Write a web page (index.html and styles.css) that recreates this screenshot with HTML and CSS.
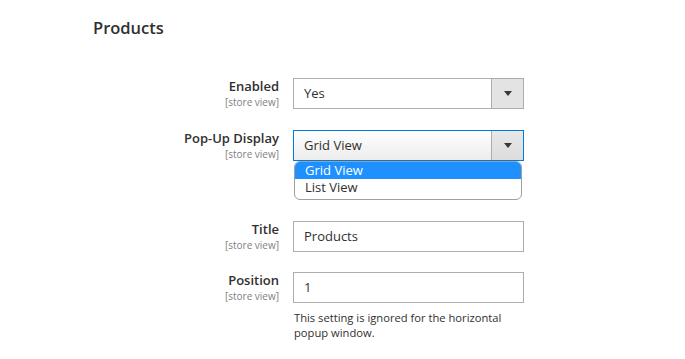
FILE: index.html
```
<!DOCTYPE html>
<html lang="en">
<head>
    <meta charset="UTF-8">
    <title>Products</title>
    <link rel="stylesheet" href="styles.css">
</head>
<body>

<div class="section">
    <h2 class="legend">Products</h2>

    <div class="field">
        <div class="label">
            <span class="label-name">Enabled</span>
            <span class="scope">[store view]</span>
        </div>
        <div class="control">
            <div class="select">
                <span class="select-value">Yes</span>
                <span class="select-arrow"></span>
            </div>
        </div>
    </div>

    <div class="field">
        <div class="label">
            <span class="label-name">Pop-Up Display</span>
            <span class="scope">[store view]</span>
        </div>
        <div class="control">
            <div class="select select-open">
                <span class="select-value">Grid View</span>
                <span class="select-arrow"></span>
            </div>
            <ul class="options">
                <li class="option selected">Grid View</li>
                <li class="option">List View</li>
            </ul>
        </div>
    </div>

    <div class="field field-title">
        <div class="label">
            <span class="label-name">Title</span>
            <span class="scope">[store view]</span>
        </div>
        <div class="control">
            <div class="input">Products</div>
        </div>
    </div>

    <div class="field">
        <div class="label">
            <span class="label-name">Position</span>
            <span class="scope">[store view]</span>
        </div>
        <div class="control">
            <div class="input">1</div>
            <div class="note">This setting is ignored for the horizontal popup window.</div>
        </div>
    </div>
</div>

</body>
</html>
```

FILE: styles.css
```
body {
    font-family: "Open Sans", sans-serif;
    margin: 0;
    padding: 0;
    background-color: #fff;
    color: #303030;
}
.section {
    padding: 16px 0 0 93px;
}
.legend {
    margin: 0 0 38px;
    font-size: 16.5px;
    font-weight: 600;
    line-height: 24px;
    color: #303030;
}
.field {
    display: grid;
    grid-template-columns: 186px 231px;
    column-gap: 14px;
    margin-bottom: 21px;
}
.field-title {
    margin-bottom: 20px;
}
.label {
    display: flex;
    flex-direction: column;
    align-items: flex-end;
    text-align: right;
    margin-top: -1px;
}
.label-name {
    font-size: 13px;
    font-weight: 600;
    line-height: 18px;
}
.scope {
    font-size: 10px;
    line-height: 14px;
    color: #808080;
}
.select {
    display: flex;
    height: 31px;
    box-sizing: border-box;
    border: 1px solid #adadad;
    background: #fff;
    font-size: 13px;
}
.select-value {
    flex: 1;
    padding: 0 10px;
    line-height: 29px;
}
.select-arrow {
    width: 31px;
    border-left: 1px solid #adadad;
    background: #e3e3e3;
    position: relative;
}
.select-arrow::after {
    content: "";
    position: absolute;
    left: 12px;
    top: 12px;
    border-left: 4px solid transparent;
    border-right: 4px solid transparent;
    border-top: 5px solid #41362f;
}
.select-open {
    border-color: #007bdb;
    background: linear-gradient(#fff, #ececec);
}
.select-open .select-arrow {
    background: linear-gradient(#e8e8e8, #dcdcdc);
}
.options {
    list-style: none;
    margin: 0 0 0 1px;
    padding: 0 0 3px;
    border: 1px solid #a0a0a0;
    border-radius: 6px;
    overflow: hidden;
    font-size: 13px;
    line-height: 17px;
    width: 228px;
    box-sizing: border-box;
}
.option {
    padding: 0 10px;
}
.option.selected {
    background: #1e90ff;
    color: #fff;
}
.input {
    height: 31px;
    box-sizing: border-box;
    border: 1px solid #adadad;
    padding: 0 10px;
    font-size: 13px;
    line-height: 29px;
}
.note {
    margin-top: 7px;
    padding-left: 1px;
    font-size: 11.2px;
    line-height: 15px;
    width: 225px;
}
```
